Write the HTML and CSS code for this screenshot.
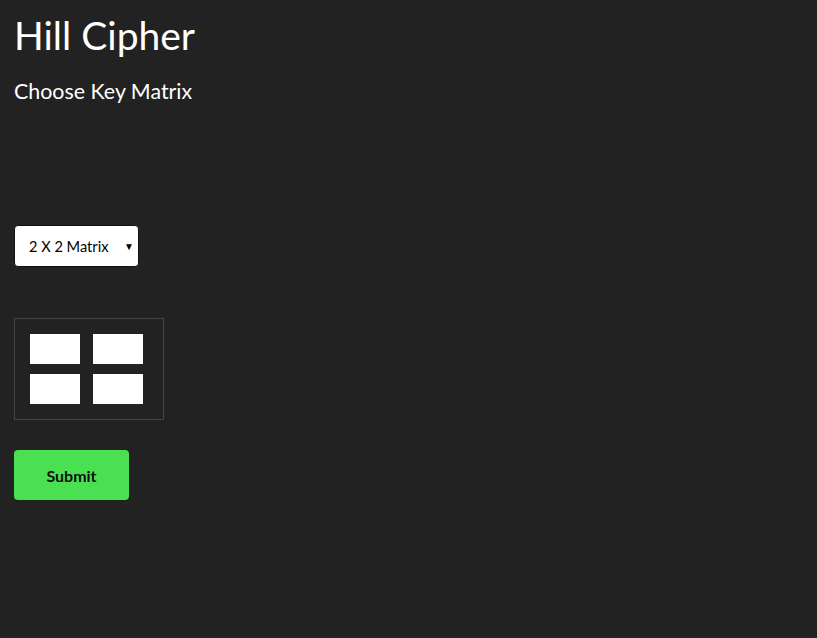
FILE: index.html
```html
<!DOCTYPE html>
<html>
<head>
<meta charset="utf-8">
<link rel="stylesheet" href="styles.css">
</head>
<body>
<main class="page">
  <h1 class="title">Hill Cipher</h1>
  <h2 class="subtitle">Choose Key Matrix</h2>
  <div class="select-wrap">
    <select class="select">
      <option>2 X 2 Matrix</option>
      <option>3 X 3 Matrix</option>
    </select>
    <span class="arrow">&#9660;</span>
  </div>
  <div class="matrix">
    <input class="cell" type="text">
    <input class="cell" type="text">
    <input class="cell" type="text">
    <input class="cell" type="text">
  </div>
  <button class="submit">Submit</button>
</main>
</body>
</html>
```
FILE: styles.css
```css
html, body {
  margin: 0;
  padding: 0;
  background: #222222;
  height: 100%;
}
body {
  font-family: Lato, "Open Sans", sans-serif;
  color: #ffffff;
}
.page {
  padding: 7px 14px;
  display: flex;
  flex-direction: column;
  align-items: flex-start;
}
.title {
  margin: 0;
  font-size: 39px;
  font-weight: 400;
  line-height: 56px;
}
.subtitle {
  margin: 15px 0 0 0;
  font-size: 21.4px;
  font-weight: 400;
  line-height: 26px;
}
.select-wrap {
  position: relative;
  margin-top: 121px;
}
.select {
  appearance: none;
  -webkit-appearance: none;
  width: 125px;
  height: 42px;
  background: #ffffff;
  border: 1px solid #111;
  border-radius: 4px;
  padding: 0 0 0 14px;
  font-family: Lato, sans-serif;
  font-size: 14.6px;
  color: #000;
  outline: none;
}
.arrow {
  position: absolute;
  right: 5px;
  top: 15px;
  font-size: 10px;
  color: #000;
  pointer-events: none;
}
.matrix {
  margin-top: 51px;
  border: 1px solid #444;
  padding: 15px 20px 15px 15px;
  display: grid;
  grid-template-columns: 50px 50px;
  column-gap: 13px;
  row-gap: 10px;
}
.cell {
  width: 50px;
  height: 30px;
  box-sizing: border-box;
  border: none;
  background: #fff;
  margin: 0;
  padding: 0;
}
.submit {
  margin-top: 30px;
  width: 115px;
  height: 50px;
  background: #4ae052;
  border: none;
  border-radius: 4px;
  font-family: Lato, sans-serif;
  font-weight: 700;
  font-size: 16px;
  color: #111;
}
```
